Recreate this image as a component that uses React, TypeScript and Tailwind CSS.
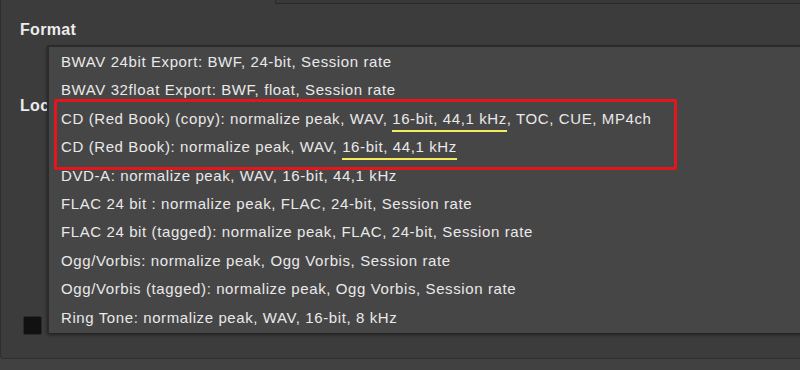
import React from "react";

const rows: { pre: string; hl?: string; post?: string }[] = [
  { pre: "BWAV 24bit Export: BWF, 24-bit, Session rate" },
  { pre: "BWAV 32float Export: BWF, float, Session rate" },
  { pre: "CD (Red Book) (copy): normalize peak, WAV,\u00a0", hl: "16-bit, 44,1 kHz", post: ", TOC, CUE, MP4ch" },
  { pre: "CD (Red Book): normalize peak, WAV,\u00a0", hl: "16-bit, 44,1 kHz" },
  { pre: "DVD-A: normalize peak, WAV, 16-bit, 44,1 kHz" },
  { pre: "FLAC 24 bit : normalize peak, FLAC, 24-bit, Session rate" },
  { pre: "FLAC 24 bit (tagged): normalize peak, FLAC, 24-bit, Session rate" },
  { pre: "Ogg/Vorbis: normalize peak, Ogg Vorbis, Session rate" },
  { pre: "Ogg/Vorbis (tagged): normalize peak, Ogg Vorbis, Session rate" },
  { pre: "Ring Tone: normalize peak, WAV, 16-bit, 8 kHz" },
];

export default function App() {
  return (
    <div
      className="w-[800px] h-[370px] overflow-hidden bg-[#424142] flex flex-col"
      style={{ fontFamily: '"Liberation Sans", Arial, sans-serif' }}
    >
      <div className="relative h-[359px] bg-[#3d3c3d] border-l border-b border-[#2f2e2f] rounded-bl-[4px] flex flex-col">
        <div className="ml-[274px] h-[4px] bg-[#3a393a] border-l border-b border-[#2a292a]" />
        <div className="pl-[19px] pt-[16px] text-[16px] tracking-[0.3px] font-bold text-[#ececec] leading-[20px]">Format</div>
        <div className="ml-[19px] mt-[56px] text-[16px] tracking-[0.3px] font-bold text-[#ececec] leading-[20px]">Loc</div>
        <div className="flex-1" />
        <div className="ml-[22px] mb-[23px] w-[19px] h-[19px] bg-[#111111] border border-[#2a2a2a] rounded-[2px]" />

        <div className="absolute left-[46px] top-[45px] w-[780px] h-[288px] bg-[#474647] border-t-2 border-l-2 border-[#2c2b2c] shadow-[0_2px_3px_rgba(0,0,0,0.45)] pt-[1px] flex flex-col">
          {rows.map((r, i) => (
            <div key={i} className="h-[28.4px] leading-[28px] pl-[12px] text-[15px] tracking-[0.6px] text-[#e9e9e9] whitespace-pre">
              <span>{r.pre}</span>
              {r.hl && (
                <span className="relative">
                  {r.hl}
                  <span className="absolute left-0 right-0 -bottom-[5px] h-[2px] bg-[#f3ec5c]" />
                </span>
              )}
              {r.post && <span>{r.post}</span>}
            </div>
          ))}
        </div>

        <div className="absolute left-[53px] top-[99px] w-[623px] h-[71px] border-[3px] border-[#e4161b] rounded-[2px]" />
      </div>
    </div>
  );
}
